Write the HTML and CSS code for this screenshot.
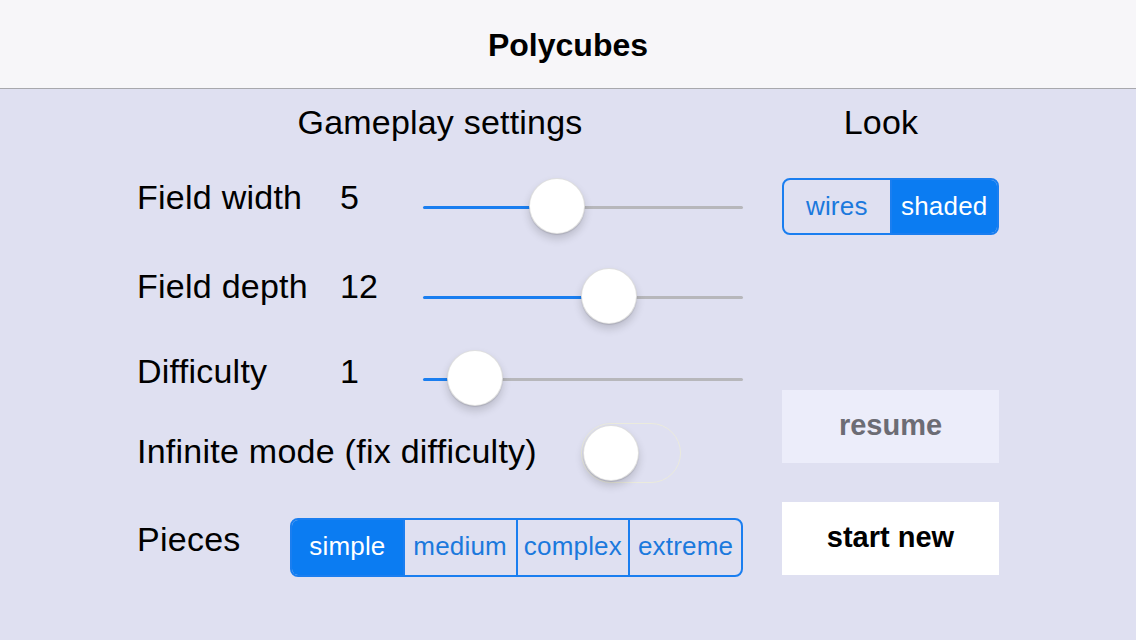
FILE: index.html
```html
<!DOCTYPE html>
<html lang="en">
<head>
<meta charset="utf-8">
<title>Polycubes</title>
<link rel="stylesheet" href="styles.css">
</head>
<body>
<header class="navbar">
  <h1 class="navbar-title">Polycubes</h1>
</header>
<main class="settings">
  <section class="gameplay">
    <h2 class="section-title">Gameplay settings</h2>

    <div class="row row-width">
      <span class="row-label">Field width</span>
      <span class="row-value">5</span>
      <div class="slider">
        <span class="slider-fill" style="width:134px"></span>
        <span class="slider-thumb"></span>
        <span class="slider-rest"></span>
      </div>
    </div>

    <div class="row row-depth">
      <span class="row-label">Field depth</span>
      <span class="row-value">12</span>
      <div class="slider">
        <span class="slider-fill" style="width:186px"></span>
        <span class="slider-thumb"></span>
        <span class="slider-rest"></span>
      </div>
    </div>

    <div class="row row-difficulty">
      <span class="row-label">Difficulty</span>
      <span class="row-value">1</span>
      <div class="slider">
        <span class="slider-fill" style="width:52px"></span>
        <span class="slider-thumb"></span>
        <span class="slider-rest"></span>
      </div>
    </div>

    <div class="row row-infinite">
      <span class="row-label">Infinite mode (fix difficulty)</span>
      <div class="switch"><span class="switch-knob"></span></div>
    </div>

    <div class="row row-pieces">
      <span class="row-label">Pieces</span>
      <div class="segmented segmented-pieces">
        <span class="segment is-selected">simple</span>
        <span class="segment">medium</span>
        <span class="segment">complex</span>
        <span class="segment">extreme</span>
      </div>
    </div>
  </section>

  <section class="look">
    <h2 class="section-title look-title">Look</h2>
    <div class="segmented segmented-look">
      <span class="segment">wires</span>
      <span class="segment is-selected">shaded</span>
    </div>
    <button class="action action-resume" type="button">resume</button>
    <button class="action action-new" type="button">start new</button>
  </section>
</main>
</body>
</html>
```

FILE: styles.css
```css
* {
  box-sizing: border-box;
}

html,
body {
  margin: 0;
  padding: 0;
}

body {
  width: 1136px;
  height: 640px;
  overflow: hidden;
  background: #dfe0f1;
  font-family: "Liberation Sans", Arial, sans-serif;
  color: #000;
}

/* Top navigation bar */
.navbar {
  height: 89px;
  background: #f7f6f9;
  border-bottom: 1px solid #a8a8ad;
  display: flex;
  align-items: center;
  justify-content: center;
}

.navbar-title {
  margin: 0;
  font-size: 32px;
  font-weight: bold;
  line-height: 40px;
  padding-top: 2px;
}

/* Two-column settings area */
.settings {
  display: grid;
  grid-template-columns: 606px 217px;
  column-gap: 39px;
  padding: 13px 0 0 137px;
}

.section-title {
  margin: 0;
  font-size: 34px;
  font-weight: normal;
  line-height: 40px;
  text-align: center;
  letter-spacing: 0.2px;
}

.look-title {
  padding-right: 19px;
}

/* Setting rows */
.row {
  display: flex;
  align-items: center;
  height: 56px;
  font-size: 34px;
}

.row-label {
  width: 201px;
  white-space: nowrap;
  letter-spacing: 0.25px;
  margin-bottom: 17px;
}

.row-value {
  width: 85px;
  padding-left: 2px;
  margin-bottom: 17px;
}

.row-width {
  margin-top: 36px;
}

.row-depth {
  margin-top: 34px;
}

.row-depth .row-label,
.row-depth .row-value {
  margin-bottom: 19px;
}

.row-difficulty {
  margin-top: 26px;
}

.row-difficulty .row-label,
.row-difficulty .row-value {
  margin-bottom: 14px;
}

.row-infinite {
  margin-top: 17px;
  height: 60px;
}

.row-infinite .row-label {
  width: 444px;
  margin-bottom: 3px;
}

.row-pieces {
  margin-top: 35px;
  height: 59px;
}

.row-pieces .row-label {
  width: 153px;
  margin-bottom: 17px;
}

/* Slider */
.slider {
  width: 320px;
  height: 56px;
  display: flex;
  align-items: center;
}

.slider-fill,
.slider-rest {
  height: 3px;
  margin-top: 3px;
  border-radius: 2px;
}

.slider-fill {
  flex: none;
  background: #1a7ef0;
}

.slider-rest {
  flex: 1;
  background: #b7b7bb;
}

.slider-thumb {
  flex: none;
  width: 56px;
  height: 56px;
  margin: 0 -28px;
  border-radius: 50%;
  background: #fff;
  border: 0.5px solid rgba(0, 0, 0, 0.12);
  box-shadow: 0 5px 9px rgba(0, 0, 0, 0.16), 0 1px 1px rgba(0, 0, 0, 0.12);
  position: relative;
  z-index: 1;
}

/* Switch (off) */
.switch {
  width: 100px;
  height: 60px;
  border: 1.5px solid #ebebdd;
  border-radius: 30px;
  display: flex;
  align-items: center;
  padding-left: 1px;
}

.switch-knob {
  width: 56px;
  height: 56px;
  border-radius: 50%;
  background: #fff;
  border: 0.5px solid rgba(0, 0, 0, 0.12);
  box-shadow: 0 5px 9px rgba(0, 0, 0, 0.16), 0 1px 1px rgba(0, 0, 0, 0.12);
}

/* Segmented controls */
.segmented {
  display: flex;
  border: 2px solid #1a7ef0;
  border-radius: 8px;
  overflow: hidden;
  font-size: 26px;
  letter-spacing: 0.2px;
  color: #1b79dd;
}

.segment {
  flex: 1;
  display: flex;
  align-items: center;
  justify-content: center;
  white-space: nowrap;
}

.segment + .segment {
  border-left: 2px solid #1a7ef0;
}

.segment.is-selected {
  background: #0b7cf2;
  color: #fff;
}

.segmented-pieces {
  width: 453px;
  height: 59px;
}

.segmented-pieces .segment {
  padding-bottom: 2px;
}

.segmented-look {
  margin-top: 36px;
  width: 217px;
  height: 57px;
}

.segmented-look .segment {
  padding-bottom: 1px;
}

/* Action buttons */
.action {
  display: block;
  width: 217px;
  height: 73px;
  border: 0;
  border-radius: 0;
  padding: 0 0 2px;
  font-family: inherit;
  font-size: 29px;
  font-weight: bold;
}

.action-resume {
  margin-top: 155px;
  background: #ecedfa;
  color: #6c6c74;
}

.action-new {
  margin-top: 39px;
  background: #fff;
  color: #000;
}
```
